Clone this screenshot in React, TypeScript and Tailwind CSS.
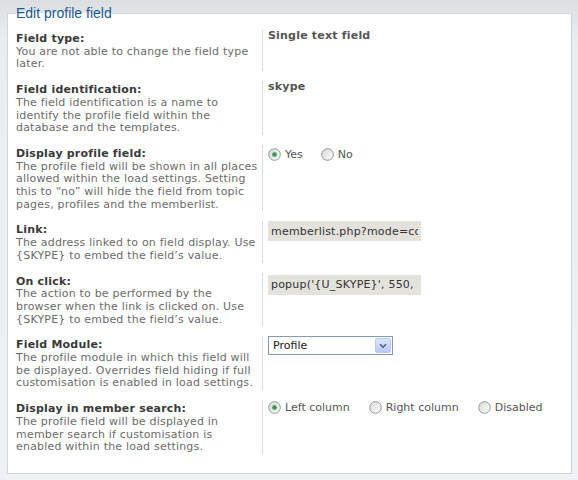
import React from "react";

interface FieldRow {
  label: string;
  desc: string[];
  value: React.ReactNode;
}

function Radio({ checked, label }: { checked?: boolean; label: string }) {
  return (
    <span className="flex items-center gap-[4px]">
      <svg width="13" height="13" viewBox="0 0 13 13" className="shrink-0">
        <defs>
          <linearGradient id={checked ? "rg-on" : "rg-off"} x1="0" y1="0" x2="1" y2="1">
            <stop offset="0" stopColor="#d9d9d2" />
            <stop offset="1" stopColor="#ffffff" />
          </linearGradient>
        </defs>
        <circle cx="6.5" cy="6.5" r="5.8" fill={`url(#${checked ? "rg-on" : "rg-off"})`} stroke="#8d9799" strokeWidth="1" />
        {checked && <circle cx="6.5" cy="6.5" r="3.6" fill="#d6ead9" />}
        {checked && <circle cx="6.5" cy="6.5" r="2.3" fill="#3f8f57" />}
      </svg>
      <span className="text-[11px] leading-[13px] text-[#555]">{label}</span>
    </span>
  );
}

function TextInput({ value }: { value: string }) {
  return (
    <input
      readOnly
      value={value}
      className="h-[20px] w-[153px] bg-[#e4e2dc] px-[3px] text-[11px] tracking-[0.2px] text-[#333] outline-none font-['DejaVu_Sans',Verdana,sans-serif]"
    />
  );
}

function SelectBox({ value }: { value: string }) {
  return (
    <div className="flex h-[19px] w-[125px] items-center border border-[#7f9db9] bg-white pl-[4px] pr-px">
      <span className="flex-1 text-[11px] leading-[13px] text-[#222]">{value}</span>
      <span className="flex h-[15px] w-[16px] items-center justify-center rounded-[2px] border border-[#b9c9ef] bg-gradient-to-b from-[#dbe5fd] to-[#b7c9f4]">
        <svg width="8" height="6" viewBox="0 0 8 6">
          <path d="M1 1.2 L4 4.2 L7 1.2" fill="none" stroke="#4d6185" strokeWidth="1.6" />
        </svg>
      </span>
    </div>
  );
}

const rows: FieldRow[] = [
  {
    label: "Field type:",
    desc: ["You are not able to change the field type", "later."],
    value: <span className="pt-px font-bold tracking-[0.2px] text-[#555]">Single text field</span>,
  },
  {
    label: "Field identification:",
    desc: ["The field identification is a name to", "identify the profile field within the", "database and the templates."],
    value: <span className="pt-px font-bold tracking-[0.2px] text-[#555]">skype</span>,
  },
  {
    label: "Display profile field:",
    desc: [
      "The profile field will be shown in all places",
      "allowed within the load settings. Setting",
      "this to \u201cno\u201d will hide the field from topic",
      "pages, profiles and the memberlist.",
    ],
    value: (
      <div className="flex items-center gap-[18px] pt-[3px]">
        <Radio checked label="Yes" />
        <Radio label="No" />
      </div>
    ),
  },
  {
    label: "Link:",
    desc: ["The address linked to on field display. Use", "{SKYPE} to embed the field\u2019s value."],
    value: <TextInput value="memberlist.php?mode=contact&action=skype&u={USER_ID}" />,
  },
  {
    label: "On click:",
    desc: ["The action to be performed by the", "browser when the link is clicked on. Use", "{SKYPE} to embed the field\u2019s value."],
    value: (
      <div className="pt-[2px]">
        <TextInput value="popup('{U_SKYPE}', 550, 320); return false;" />
      </div>
    ),
  },
  {
    label: "Field Module:",
    desc: [
      "The profile module in which this field will",
      "be displayed. Overrides field hiding if full",
      "customisation is enabled in load settings.",
    ],
    value: <SelectBox value="Profile" />,
  },
  {
    label: "Display in member search:",
    desc: ["The profile field will be displayed in", "member search if customisation is", "enabled within the load settings."],
    value: (
      <div className="flex items-center gap-[19px] pt-px">
        <Radio checked label="Left column" />
        <Radio label="Right column" />
        <Radio label="Disabled" />
      </div>
    ),
  },
];

export default function App() {
  return (
    <div className="h-[480px] w-[578px] overflow-hidden bg-[linear-gradient(to_bottom,#dcdfe2_0px,#eaecee_40px,#f0f1f2_100%)] pt-[5px] font-['DejaVu_Sans',Verdana,sans-serif]">
      <fieldset className="ml-[7px] w-[565px] border border-[#d3d6d9] bg-white px-[8px] pb-[9px] pt-[9px]">
        <legend className="text-[14px] leading-[16px] text-[#1d5a91] font-['Liberation_Sans',Arial,sans-serif]">
          Edit profile field
        </legend>

        {rows.map((row) => (
          <div key={row.label} className="mb-[10px] flex text-[11px] leading-[12.7px]">
            {/* Label column */}
            <div className="w-[246px] shrink-0 pt-[3px] tracking-[0.2px]">
              <div className="font-bold text-[#3a3a3a]">{row.label}</div>
              {row.desc.map((line) => (
                <div key={line} className="whitespace-nowrap text-[#6b6b6b]">
                  {line}
                </div>
              ))}
            </div>

            {/* Value column */}
            <div className="flex-1 border-l border-[#d8dadc] pl-[5px]">{row.value}</div>
          </div>
        ))}
      </fieldset>
    </div>
  );
}
